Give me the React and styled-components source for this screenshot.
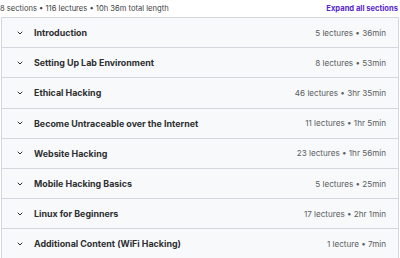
import React from 'react';
import styled, { createGlobalStyle } from 'styled-components';

const GlobalStyle = createGlobalStyle`
  body {
    margin: 0;
    background: #ffffff;
    font-family: Inter, "Noto Sans", sans-serif;
    color: #2d2f31;
  }
`;

const Wrapper = styled.div`
  width: 400px;
  height: 258px;
  overflow: hidden;
`;

const TopBar = styled.div`
  display: flex;
  align-items: center;
  justify-content: space-between;
  height: 17px;
  padding: 0 2px 0 0;
`;

const Stats = styled.span`
  font-size: 7.6px;
  color: #3e4143;
`;

const ExpandLink = styled.button`
  background: none;
  border: none;
  padding: 0;
  color: #5624d0;
  font-family: inherit;
  font-size: 7.6px;
  font-weight: 700;
  cursor: pointer;
`;

const SectionList = styled.div`
  margin: 0 1px;
  border: 1px solid #d1d7dc;
  border-bottom: none;
`;

const SectionRow = styled.div`
  display: flex;
  align-items: center;
  height: 29.2px;
  padding: 0 12px 0 14px;
  background: #f7f9fa;
  border-bottom: 1px solid #d1d7dc;
`;

const Chevron = styled.svg`
  width: 8px;
  height: 8px;
  margin-right: 10px;
  flex-shrink: 0;
`;

const Title = styled.span`
  flex: 1;
  font-size: 8.9px;
  font-weight: 700;
  color: #2d2f31;
`;

const Meta = styled.span`
  font-size: 8.1px;
  color: #5a5e62;
`;

const sections = [
  ['Introduction', '5 lectures • 36min'],
  ['Setting Up Lab Environment', '8 lectures • 53min'],
  ['Ethical Hacking', '46 lectures • 3hr 35min'],
  ['Become Untraceable over the Internet', '11 lectures • 1hr 5min'],
  ['Website Hacking', '23 lectures • 1hr 56min'],
  ['Mobile Hacking Basics', '5 lectures • 25min'],
  ['Linux for Beginners', '17 lectures • 2hr 1min'],
  ['Additional Content (WiFi Hacking)', '1 lecture • 7min'],
];

const App = () => {
  return (
    <>
      <GlobalStyle />
      <Wrapper>
        <TopBar>
          <Stats>8 sections • 116 lectures • 10h 36m total length</Stats>
          <ExpandLink>Expand all sections</ExpandLink>
        </TopBar>
        <SectionList>
          {sections.map(([title, meta]) => (
            <SectionRow key={title}>
              <Chevron viewBox="0 0 24 24" fill="none" stroke="#2d2f31" strokeWidth="3" strokeLinecap="round" strokeLinejoin="round">
                <path d="M6 9l6 6 6-6" />
              </Chevron>
              <Title>{title}</Title>
              <Meta>{meta}</Meta>
            </SectionRow>
          ))}
        </SectionList>
      </Wrapper>
    </>
  );
};

export default App;
